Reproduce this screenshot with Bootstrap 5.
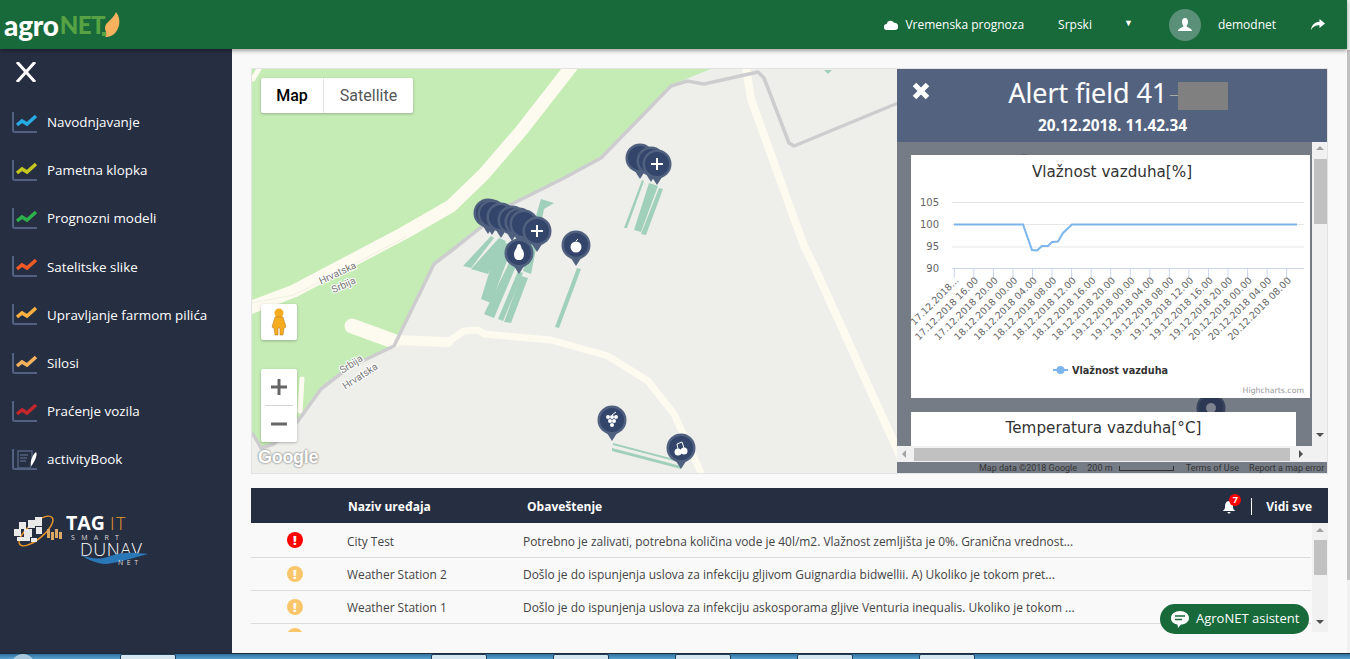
<!DOCTYPE html>
<html lang="sr">
<head>
    <meta charset="UTF-8">
    <meta name="viewport" content="width=device-width, initial-scale=1.0">
    <title>AgroNET</title>
    <link href="https://cdn.jsdelivr.net/npm/bootstrap@5.3.3/dist/css/bootstrap.min.css" rel="stylesheet">
    <style>
        html, body { height: 100%; overflow: hidden; }
        body { background: #f9f9f9; font-family: "Open Sans", sans-serif; font-size: 12px; color: #444; }
        .app-top { height: 653px; min-height: 0; }
        .page-strip { width: 3px; background: #f1f1f1; }
        .page-strip-thumb { height: 530px; background: #c1c1c1; margin-top: 50px; }
        .app-bar { height: 49px; background: #186a3b; padding: 0 22px 0 4px; color: #fff; font-size: 12px; box-shadow: 0 2px 4px rgba(0,0,0,.35); position: relative; z-index: 5; flex-wrap: nowrap; }
        .logo-txt { font-family: Lato, sans-serif; font-weight: 900; font-size: 28px; letter-spacing: -.2px; }
        .logo-net { color: #57a344; font-size: 24px; margin-left: 1px; letter-spacing: -.6px; }
        .bar-forecast { gap: 7px; margin-left: -1px; }
        .bar-lang { margin-left: 34px; }
        .bar-caret { margin-left: 32px; font-size: 9px; margin-top: -4px; }
        .bar-avatar { width: 32px; height: 32px; background: #5a9077; margin-left: 36px; }
        .bar-user { margin-left: 17px; font-size: 12px; }
        .bar-share { margin-left: 35px; }
        .side-panel { width: 232px; background: #262e42; flex: none; padding: 13px 0 0 15px; }
        .side-close { display: block; margin-bottom: 16px; }
        .side-link { height: 48.2px; color: #fff; font-size: 13.4px; gap: 9px; margin-left: -3px; padding: 0; }
        .side-link:hover { color: #fff; }
        .side-logos { display: block; margin: 22px 0 0 -5px; }
        .main-area { padding: 19px 19px 0; min-width: 0; }
        .map-box { height: 406px; border: 1px solid #e3e3e3; background: #eeefeb; overflow: hidden; }
        .map-box > svg { display: block; }
        .map-ctl { position: absolute; background: #fff; box-shadow: 0 1px 3px rgba(0,0,0,.25); border-radius: 2px; }
        .map-type { left: 9px; top: 9px; height: 35px; font-family: Roboto, sans-serif; font-size: 16px; color: #565656; }
        .map-type span { width: 90px; line-height: 35px; text-align: center; }
        .map-type span + span { border-left: 1px solid #e6e6e6; }
        .map-type .is-on { width: 62px; color: #000; font-weight: 500; }
        .map-peg { left: 9px; top: 235px; width: 36px; height: 36px; }
        .map-zoom { left: 9px; top: 300px; width: 36px; height: 73px; }
        .map-zoom hr { margin: 0 4px; border-color: #aaa; opacity: .5; }
        .map-zoom div { height: 36px; }
        .map-google { position: absolute; left: 6px; bottom: 2px; font-family: "Liberation Sans", sans-serif; font-weight: 700; font-size: 18px; color: #fff; letter-spacing: -.3px; text-shadow: 0 0 2px #888, 0 0 2px #888; }
        .alert-panel { position: absolute; left: 645px; top: 0; width: 431px; height: 405px; background: rgba(38,46,66,.6); }
        .alert-head { height: 73px; background: #53627f; color: #fff; text-align: center; position: relative; flex: none; }
        .alert-x { position: absolute; left: 15px; top: 13px; }
        .alert-title { font-size: 27px; line-height: 34px; padding-top: 7px; font-weight: 400; margin: 0 0 0 11px; -webkit-text-stroke: .2px #fff; }
        .alert-mask { display: inline-block; width: 50px; height: 28px; background: #808080; vertical-align: -7px; margin-left: 10px; position: relative; }
        .alert-mask::before { content: ""; position: absolute; left: -8px; top: 13px; width: 8px; height: 1px; background: #aaa; }
        .alert-date { font-size: 15.4px; font-weight: 700; line-height: 20px; margin-top: 6px; }
        .alert-scroll { height: 304px; flex: none; }
        .alert-charts { padding: 13px 0 0 14px; width: 415px; overflow: hidden; }
        .chart-sheet { background: #fff; width: 399px; height: 243px; }
        .chart-sheet svg { display: block; }
        .chart-sheet2 { background: #fff; width: 385px; height: 60px; margin-top: 14px; text-align: center; font-family: "DejaVu Sans", sans-serif; font-size: 15.2px; color: #333; padding-top: 5px; }
        .scroll-v { width: 16px; background: #f1f1f1; padding-top: 2px; flex: none; }
        .scroll-v-thumb { position: absolute; left: 2px; width: 13px; background: #c1c1c1; }
        .arrow-up, .arrow-down, .arrow-left, .arrow-right { width: 0; height: 0; border-style: solid; border-color: transparent; position: absolute; }
        .arrow-up { border-width: 0 4px 4px; border-bottom-color: #a3a3a3; }
        .arrow-down { border-width: 4px 4px 0; border-top-color: #505050; }
        .arrow-left { border-width: 4px 4px 4px 0; border-right-color: #a3a3a3; }
        .arrow-right { border-width: 4px 0 4px 4px; border-left-color: #505050; }
        .scroll-h { height: 16px; background: #f1f1f1; flex: none; }
        .scroll-h-thumb { position: absolute; left: 17px; top: 2px; width: 376px; height: 13px; background: #c1c1c1; }
        .map-foot { height: 12px; font-family: Roboto, sans-serif; font-size: 9px; color: #333; line-height: 12px; padding-left: 82px; white-space: nowrap; flex: none; }
        .foot-scale { display: inline-block; width: 55px; height: 5px; border: 1px solid #333; border-top: 0; margin: 0 12px 0 4px; }
        .foot-terms { margin-right: 10px; }
        .notif-head { height: 35px; background: #262e42; margin-top: 14px; color: #fff; font-weight: 700; font-size: 12px; padding-right: 16px; padding-top: 2px; }
        .notif-name { margin-left: 97px; width: 179px; }
        .notif-bell { margin-right: 15px; }
        .notif-badge { position: absolute; left: 7px; top: -6px; width: 12px; height: 12px; background: #f00; border-radius: 50%; font-size: 9px; line-height: 12px; text-align: center; color: #fff; font-weight: 700; }
        .notif-sep { width: 1px; height: 17px; background: #fff; margin-right: 14px; }
        .notif-wrap { height: 109px; overflow: hidden; padding-top: 1px; }
        .notif-table { table-layout: fixed; width: 1060px; margin: 0; --bs-table-bg: transparent; --bs-table-color: #444; font-size: 11.95px; }
        .notif-table td { height: 33px; padding: 3px 0 0; vertical-align: middle; border-bottom: 1px solid #ddd; white-space: nowrap; overflow: hidden; }
        .notif-table tr:last-child td { border: 0; vertical-align: top; padding-top: 7px; }
        .notif-scroll { position: absolute; right: 0; top: 0; height: 109px; background: #f1f1f1; }
        .stat-dot { width: 16px; height: 16px; border-radius: 50%; color: #fff; font-weight: 800; font-size: 13px; line-height: 16px; text-align: center; margin: -3px 0 0 36px; }
        .stat-red { background: #f00; }
        .stat-amber { background: #fac66b; }
        .chat-btn { position: absolute; right: 38px; bottom: 19px; width: 149px; height: 30px; background: #186a3b; color: #fff; border-radius: 15px; font-size: 13px; gap: 7px; padding-left: 11px; }
        .task-bar { height: 6px; background: linear-gradient(#2e6f9e, #5ba3d2); border-top: 1px solid #1c2c3a; gap: 0; overflow: hidden; }
        .task-orb { width: 24px; height: 24px; background: #a8c8de; border-radius: 50%; margin: 0 85px 0 11px; flex: none; }
        .task-btn { height: 12px; background: #d6e6f0; border: 1px solid #1d3f5a; border-radius: 2px; flex: none; width: 56px; margin-right: 66px; }
        .task-gap { margin-right: 255px; }
    </style>
</head>
<body>
<div class="d-flex app-top">
<div class="d-flex flex-column flex-grow-1" style="min-width:0">
    <nav class="navbar app-bar d-flex align-items-center">
        <div class="d-flex align-items-center">
            <span class="logo-txt">agro</span><span class="logo-txt logo-net">NET</span>
            <svg width="20" height="28" viewBox="0 0 20 28" style="margin-left:-3px">
                <path d="M14 1C18 6 19 14 14 21 11 25 7 26 3 26 6 23 3 20 3 17 3 11 11 9 14 1Z" fill="#f6b15f"/>
                <path d="M0 21H4V25H0ZM-1 26H5" fill="#57a344"/>
            </svg>
        </div>
        <div class="d-flex align-items-center ms-auto">
            <div class="d-flex align-items-center bar-forecast">
                <svg width="14" height="10" viewBox="0 0 14 10"><path d="M3 10A3 3 0 0 1 2.600 4 4 4 0 0 1 10 2.800 3.600 3.600 0 0 1 11 10Z" fill="#fff"/></svg>
                <span>Vremenska prognoza</span>
            </div>
            <span class="bar-lang">Srpski</span>
            <span class="bar-caret">▼</span>
            <div class="bar-avatar rounded-circle d-flex align-items-center justify-content-center">
                <svg width="16" height="16" viewBox="0 0 16 16"><path d="M8 1C5.800 1 5 3 5 5 5 7 6 8 6.500 9 6.500 10.500 1 11 1 14H15C15 11 9.500 10.500 9.500 9 10 8 11 7 11 5 11 3 10.200 1 8 1Z" fill="#fff"/></svg>
            </div>
            <span class="bar-user">demodnet</span>
            <svg class="bar-share" width="14" height="11" viewBox="0 0 14 11"><path d="M8.500 0L14 4.500 8.500 9V6.300C4.500 6.100 2 7.500 0 11 .5 6 3.500 3 8.500 2.700Z" fill="#fff"/></svg>
        </div>
    </nav>

    <div class="d-flex flex-grow-1" style="min-height:0">
        <aside class="side-panel">
            <svg class="side-close" width="22" height="20" viewBox="0 0 22 20"><path d="M2 0L20 20M20 0L2 20" stroke="#fff" stroke-width="3"/></svg>
            <nav class="nav flex-column" id="side-nav"></nav>
            <svg class="side-logos" width="145" height="65" viewBox="10 505 145 65">
                <ellipse cx="36" cy="530" rx="21" ry="8" transform="rotate(-40 36 530)" fill="none" stroke="#e8952a" stroke-width="1.500"/>
                <g fill="#e9e9e9">
                    <rect x="14" y="528" width="7" height="7"/><rect x="19" y="521" width="7" height="7"/><rect x="24" y="528" width="8" height="8"/>
                    <rect x="28" y="519" width="7" height="8"/><rect x="35" y="516" width="7" height="9"/><rect x="36" y="526" width="6" height="7"/>
                    <rect x="17" y="536" width="13" height="4"/><rect x="31" y="537" width="6" height="4"/>
                </g>
                <g fill="#dba765">
                    <rect x="47" y="528" width="3" height="9"/><rect x="51" y="531" width="3" height="8"/><rect x="55" y="528" width="3" height="9"/><rect x="59" y="531" width="3" height="7"/>
                </g>
                <text x="66" y="529" font-family="Open Sans, sans-serif" font-weight="700" font-size="19.500" fill="#fff">TAG</text>
                <text x="110" y="529" font-family="Open Sans, sans-serif" font-weight="300" font-size="18" fill="#e8952a">I</text>
                <text x="116" y="529" font-family="Open Sans, sans-serif" font-weight="300" font-size="18" fill="#e8952a">T</text>
                <text x="71" y="539" font-family="Open Sans, sans-serif" font-size="7" letter-spacing="6.300" fill="#ddd">SMART</text>
                <text x="80" y="555" font-family="Open Sans, sans-serif" font-weight="300" font-size="18" letter-spacing=".5" fill="#fff">DUNAV</text>
                <path d="M81 554C92 558 100 559 110 555 125 550 138 552 148 553 135 556 125 560 112 562 102 565 90 560 81 554Z" fill="#2a78b8"/>
                <text x="118" y="564" font-family="Open Sans, sans-serif" font-size="7" letter-spacing="3.500" fill="#ddd">NET</text>
            </svg>
        </aside>

        <main class="main-area flex-grow-1 position-relative">
            <div class="map-box position-relative">
                <svg width="1077" height="406" viewBox="251 68 1077 406" xmlns="http://www.w3.org/2000/svg">
                    <defs>
                        <g id="pin">
                            <path d="M-7 10L7 10 0 21Z" fill="#50607f"/>
                            <circle r="14.500" fill="#50607f"/>
                            <circle r="12" fill="#33456b"/>
                        </g>
                    </defs>
                    <path d="M251 68H710L670 84 600 155 563 177 507 205 450 252 433 263 393 345 347 367 320 388 297 420 273 443 260 447 251 433Z" fill="#c5ecb5"/>
                    <g fill="none" stroke-linejoin="round" stroke-linecap="round">
                        <path d="M246 308L293 290 403 232 450 205 483 173 520 130 570 66" stroke="#fdfaef" stroke-width="13"/>
                        <path d="M251 302L293 294 405 236" stroke="#f1efe4" stroke-width="1"/>
                        <path d="M745 66L750 98 803 245 813 265 900 457" stroke="#fdfaef" stroke-width="8"/>
                        <path d="M351 325L392 340" stroke="#fdfaef" stroke-width="15"/>
                        <path d="M393 339L447 341" stroke="#fdfaef" stroke-width="10"/>
                        <path d="M447 341L463 330 477 329 483 333 550 339 607 355 647 380 673 413 702 476" stroke="#fdfaef" stroke-width="7"/>
                        <path d="M301 378L299 410" stroke="#fdfaef" stroke-width="5"/>
                        <path d="M252 78L258 68" stroke="#fdfaef" stroke-width="5"/>
                        <path d="M252 433L260 447 273 443 297 420 320 388 347 367 393 345 433 263 450 250 507 205 563 177 600 157 670 85 686 80 703 83 757 71 763 77 788 142 793 145 897 102" stroke="#cdcdcf" stroke-width="3.500"/>
                    </g>
                    <g fill="#a0cfba">
                        <path d="M462 265L490 235 493 237 470 267Z"/>
                        <path d="M470 268L498 237 505 240 487 273Z"/>
                        <path d="M480 298L498 240 512 244 490 302Z"/>
                        <path d="M483 313L508 262 515 265 493 317Z"/>
                        <path d="M497 318L517 270 522 272 502 320Z"/>
                        <path d="M503 321L520 275 527 277 510 322Z"/>
                        <path d="M522 270L535 215 540 198 553 202 543 208 530 273Z"/>
                        <path d="M554 326L576 267 580 268 558 327Z"/>
                        <path d="M623 227L641 179 643 180 626 227Z"/>
                        <path d="M633 229L648 182 657 185 640 231Z"/>
                        <path d="M640 233L658 187 662 188 645 234Z"/>
                        <path d="M823 69H831L827 73Z"/>
                        <path d="M612 442L677 459 677 461 612 444Z"/>
                        <path d="M611 447L680 465 680 468 611 450Z"/>
                    </g>
                    <g font-family="Roboto, sans-serif" font-size="10" fill="#777" stroke="#fff" stroke-width="2" paint-order="stroke" text-anchor="middle">
                        <text transform="translate(338 275) rotate(-25)">Hrvatska</text>
                        <text transform="translate(344 287) rotate(-25)">Srbija</text>
                        <text transform="translate(352 366) rotate(-33)">Srbija</text>
                        <text transform="translate(361 378) rotate(-33)">Hrvatska</text>
                    </g>
                    <use href="#pin" x="487" y="212"/><use href="#pin" x="491" y="213"/><use href="#pin" x="500" y="216"/>
                    <use href="#pin" x="511" y="219"/><use href="#pin" x="518" y="221"/><use href="#pin" x="523" y="223"/>
                    <use href="#pin" x="536" y="230"/>
                    <path d="M536 224V236M530 230H542" stroke="#fff" stroke-width="2"/>
                    <use href="#pin" x="518" y="252"/>
                    <path d="M518 243C520 243 520 246 521 248 524 251 524 259 518 259 512 259 512 251 515 248 516 246 516 243 518 243Z" fill="#fff"/>
                    <use href="#pin" x="575" y="244"/>
                    <circle cx="575" cy="246" r="5.500" fill="#fff"/><path d="M575 240L577 238" stroke="#fff"/>
                    <use href="#pin" x="639" y="157"/><use href="#pin" x="650" y="160"/><use href="#pin" x="656" y="163"/>
                    <path d="M656 157V169M650 163H662" stroke="#fff" stroke-width="2"/>
                    <use href="#pin" x="611" y="419"/>
                    <g fill="#fff"><circle cx="607" cy="416" r="2"/><circle cx="611" cy="416" r="2"/><circle cx="615" cy="416" r="2"/><circle cx="609" cy="420" r="2"/><circle cx="613" cy="420" r="2"/><circle cx="611" cy="424" r="2"/></g>
                    <path d="M611 414L615 411" stroke="#fff"/>
                    <use href="#pin" x="680" y="447"/>
                    <circle cx="677" cy="451" r="3.500" fill="#fff"/><circle cx="683" cy="450" r="3.500" fill="#fff"/>
                    <path d="M677 448L676 443 681 441 683 447" stroke="#fff" fill="none"/>
                    <use href="#pin" x="1023" y="168"/>
                    <use href="#pin" x="1210" y="407"/>
                    <circle cx="1210" cy="407" r="5" fill="#fff"/>
                </svg>

                <div class="map-ctl map-type d-flex"><span class="is-on">Map</span><span>Satellite</span></div>
                <div class="map-ctl map-peg d-flex align-items-center justify-content-center">
                    <svg width="16" height="28" viewBox="0 0 16 28">
                        <circle cx="8" cy="5" r="4.500" fill="#f5ac1e"/>
                        <path d="M4 9H12L15 19 13 20 12 27H9V20H7V27H4L3 20 1 19Z" fill="#f5ac1e" stroke="#b9802a" stroke-width=".6"/>
                    </svg>
                </div>
                <div class="map-ctl map-zoom">
                    <div class="d-flex align-items-center justify-content-center"><svg width="16" height="16" viewBox="0 0 16 16"><path d="M8 0V16M0 8H16" stroke="#666" stroke-width="3"/></svg></div>
                    <hr>
                    <div class="d-flex align-items-center justify-content-center"><svg width="16" height="4" viewBox="0 0 16 4"><path d="M0 2H16" stroke="#666" stroke-width="3"/></svg></div>
                </div>
                <div class="map-google">Google</div>

                <section class="alert-panel d-flex flex-column">
                    <div class="alert-head">
                        <svg class="alert-x" width="18" height="18" viewBox="0 0 18 18"><path d="M2.500 2.500L15.500 15.500M15.500 2.500L2.500 15.500" stroke="#fff" stroke-width="5"/></svg>
                        <h2 class="alert-title">Alert field 41<span class="alert-mask"></span></h2>
                        <div class="alert-date">20.12.2018. 11.42.34</div>
                    </div>
                    <div class="alert-scroll d-flex">
                        <div class="alert-charts">
                            <div class="chart-sheet">
                                <svg id="humidity-chart" width="399" height="243" viewBox="911 155 399 243" xmlns="http://www.w3.org/2000/svg">
                                    <text x="1112" y="177" text-anchor="middle" font-family="DejaVu Sans, sans-serif" font-size="15.200" fill="#333">Vlažnost vazduha[%]</text>
                                    <g stroke="#e6e6e6"><path d="M952 202.500H1304M952 224.500H1304M952 247H1304"/></g>
                                    <path d="M952 268.500H1304" stroke="#ccd6eb"/>
                                    <g font-family="DejaVu Sans, sans-serif" font-size="10" fill="#666" text-anchor="end">
                                        <text x="939" y="206">105</text><text x="939" y="228">100</text><text x="939" y="250">95</text><text x="939" y="272">90</text>
                                    </g>
                                    <path d="M954 224.500L1023 224.500 1032 250 1037 250.500 1042 246 1048 246 1052 242 1058 241.500 1063 233 1072 224.500 1297 224.500" fill="none" stroke="#7cb5ec" stroke-width="2"/>
                                    <g id="x-axis"></g>
                                    <path d="M1053 370H1068" stroke="#7cb5ec" stroke-width="2"/><circle cx="1060.500" cy="370" r="4" fill="#7cb5ec"/>
                                    <text x="1072" y="374" font-family="DejaVu Sans, sans-serif" font-weight="700" font-size="9.700" fill="#333">Vlažnost vazduha</text>
                                    <text x="1304" y="393" text-anchor="end" font-family="DejaVu Sans, sans-serif" font-size="7.800" fill="#999">Highcharts.com</text>
                                </svg>
                            </div>
                            <div class="chart-sheet2">Temperatura vazduha[°C]</div>
                        </div>
                        <div class="scroll-v position-relative">
                            <div class="arrow-up" style="left:4px;top:4px"></div>
                            <div class="scroll-v-thumb" style="top:17px;height:65px"></div>
                            <div class="arrow-down" style="left:4px;top:291px"></div>
                        </div>
                    </div>
                    <div class="scroll-h position-relative">
                        <div class="arrow-left" style="left:5px;top:4px"></div>
                        <div class="scroll-h-thumb"></div>
                        <div class="arrow-right" style="left:402px;top:4px"></div>
                    </div>
                    <div class="map-foot">Map data ©2018 Google <span class="ms-2">200 m</span> <span class="foot-scale"></span><span class="foot-terms">Terms of Use</span>Report a map error</div>
                </section>
            </div>

            <div class="notif-head d-flex align-items-center">
                <span class="notif-name">Naziv uređaja</span>
                <span>Obaveštenje</span>
                <span class="notif-bell position-relative ms-auto">
                    <svg class="d-block" width="14" height="14" viewBox="0 0 14 14"><path d="M7 1C4 1 3 4 3 7 3 9 2 10 .5 11H13.500C12 10 11 9 11 7 11 4 10 1 7 1ZM5.500 12A1.500 1.500 0 0 0 8.500 12Z" fill="#fff"/></svg>
                    <span class="notif-badge">7</span>
                </span>
                <span class="notif-sep"></span>
                <span>Vidi sve</span>
            </div>

            <div class="position-relative">
                <div class="notif-wrap">
                    <table class="table notif-table">
                        <colgroup><col style="width:96px"><col style="width:176px"><col></colgroup>
                        <tbody>
                            <tr><td><div class="stat-dot stat-red">!</div></td><td>City Test</td><td>Potrebno je zalivati, potrebna količina vode je 40l/m2. Vlažnost zemljišta je 0%. Granična vrednost...</td></tr>
                            <tr><td><div class="stat-dot stat-amber">!</div></td><td>Weather Station 2</td><td>Došlo je do ispunjenja uslova za infekciju gljivom Guignardia bidwellii. A) Ukoliko je tokom pret...</td></tr>
                            <tr><td><div class="stat-dot stat-amber">!</div></td><td>Weather Station 1</td><td>Došlo je do ispunjenja uslova za infekciju askosporama gljive Venturia inequalis. Ukoliko je tokom ...</td></tr>
                            <tr><td><div class="stat-dot stat-amber"></div></td><td></td><td></td></tr>
                        </tbody>
                    </table>
                </div>
                <div class="scroll-v notif-scroll">
                    <div class="arrow-up" style="left:4px;top:5px"></div>
                    <div class="scroll-v-thumb" style="top:17px;height:35px"></div>
                    <div class="arrow-down" style="left:4px;top:97px"></div>
                </div>
            </div>

            <div class="chat-btn d-flex align-items-center">
                <svg width="18" height="17" viewBox="0 0 18 17"><path d="M9 0C14 0 18 3 18 7 18 11 14 13.500 10 13.500L7 17 6.500 13.500C3 13 0 11 0 7 0 3 4 0 9 0Z" fill="#fff"/><path d="M4 5H14M4 8.500H11" stroke="#186a3b" stroke-width="1.500"/></svg>
                <span>AgroNET asistent</span>
            </div>
        </main>
    </div>
</div>
<div class="page-strip"><div class="page-strip-thumb"></div></div>
</div>

<footer class="task-bar d-flex">
    <div class="task-orb"></div>
    <div class="task-btn task-gap"></div>
    <div class="task-btn"></div>
    <div class="task-btn"></div>
    <div class="task-btn"></div>
    <div class="task-btn"></div>
    <div class="task-btn"></div>
</footer>

<script>
    // sidebar entries: label and line colour
    const sideItems = [
        ['Navodnjavanje', '#27aae1'], ['Pametna klopka', '#c4c71e'], ['Prognozni modeli', '#2eb04a'],
        ['Satelitske slike', '#f15a24'], ['Upravljanje farmom pilića', '#fbb040'], ['Silosi', '#f6b15c'],
        ['Praćenje vozila', '#c1272d'], ['activityBook', null]
    ];
    document.getElementById('side-nav').innerHTML = sideItems.map(([label, color]) => {
        const inner = color
            ? `<path d="M5 13L10 9 15 12 24 4" fill="none" stroke="${color}" stroke-width="3.500"/>`
            : `<path d="M6 2H20V14L18 19H6ZM8 6H16M8 9H15M8 12H14" fill="none" stroke="#51617f" stroke-width="1.500"/><path d="M24 3C26 6 22 14 19 17 18 13 20 6 24 3Z" fill="#fff"/>`;
        return `<a class="nav-link side-link d-flex align-items-center" href="#"><svg width="26" height="21" viewBox="0 0 26 21"><path d="M1 0V18.500Q1 20 3 20H25" fill="none" stroke="#51617f" stroke-width="2"/>${inner}</svg><span>${label}</span></a>`;
    }).join('');

    // x axis of the chart
    const days = ['17.12.2018...', '17.12.2018 16.00', '17.12.2018 20.00'];
    ['18', '19'].forEach(d => ['00', '04', '08', '12', '16', '20'].forEach(h => days.push(`${d}.12.2018 ${h}.00`)));
    ['00', '04', '08'].forEach(h => days.push(`20.12.2018 ${h}.00`));
    document.getElementById('x-axis').innerHTML = days.map((label, i) => {
        const x = 954.3 + i * 19.55;
        return `<path d="M${x} 268.5V278" stroke="#ccd6eb"/><text transform="translate(${x + 5} 281) rotate(-45)" text-anchor="end" font-family="DejaVu Sans, sans-serif" font-size="9.5" fill="#666">${label}</text>`;
    }).join('');
</script>
<script src="https://cdn.jsdelivr.net/npm/bootstrap@5.3.3/dist/js/bootstrap.bundle.min.js"></script>
</body>
</html>
